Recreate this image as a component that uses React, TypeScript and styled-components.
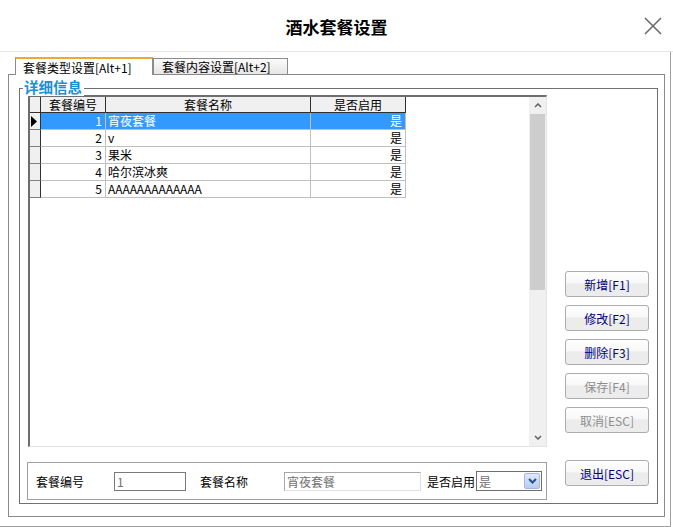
import React from "react";
import styled, { createGlobalStyle, css } from "styled-components";

const GlobalStyle = createGlobalStyle`
  html, body { margin: 0; padding: 0; background: #fff; }
  body {
    font-family: "Noto Sans CJK SC", "Liberation Sans", sans-serif;
    font-size: 12px;
    color: #000;
  }
  * { box-sizing: border-box; }
`;

const Window = styled.div`
  width: 673px;
  height: 527px;
  display: flex;
  flex-direction: column;
  background: #fff;
  overflow: hidden;
`;

const TitleBar = styled.div`
  height: 52px;
  flex-shrink: 0;
  display: grid;
  grid-template-columns: 1fr auto 1fr;
  align-items: center;
  border-bottom: 1px solid #e6e6e6;
`;

const Title = styled.div`
  grid-column: 2;
  font-size: 17px;
  font-weight: bold;
  padding-top: 1px;
`;

const CloseButton = styled.button`
  justify-self: end;
  margin-right: 9px;
  width: 22px;
  height: 22px;
  border: 0;
  padding: 0;
  background: none;
  display: flex;
  align-items: center;
  justify-content: center;
`;

const Body = styled.div`
  width: 671px;
  height: 475px;
  border-right: 1px solid #a0a0a0;
  border-bottom: 1px solid #a0a0a0;
  padding: 5px 0 0 8px;
`;

const TabStrip = styled.div`
  display: flex;
  align-items: flex-end;
  height: 17px;
  padding-left: 7px;
  position: relative;
  z-index: 1;
`;

const Tab = styled.div<{ $active?: boolean; $width: number }>`
  width: ${(p) => p.$width}px;
  display: flex;
  align-items: center;
  padding-left: 7px;
  white-space: nowrap;
  border: 1px solid #8c8c8c;
  border-bottom: none;
  ${(p) =>
    p.$active
      ? css`
          height: 18px;
          margin-bottom: -1px;
          border-top: 2px solid #f2a63a;
          background: #fff;
          padding-top: 1px;
        `
      : css`
          height: 16px;
          background: linear-gradient(#fbfbfb, #e6e6e6);
          padding-left: 8px;
        `}
`;

const Panel = styled.div`
  width: 657px;
  height: 443px;
  border: 1px solid #8a8a8a;
  padding: 13px 0 0 10px;
`;

const GroupBox = styled.div`
  position: relative;
  width: 639px;
  height: 416px;
  border: 1px solid #707070;
  padding: 6px 0 0 7px;
  display: grid;
  grid-template-columns: 520px 84px;
  column-gap: 18px;
`;

const Legend = styled.span`
  position: absolute;
  top: -11px;
  left: 3px;
  padding: 0 2px 0 1px;
  background: #fff;
  color: #1a8fd3;
  font-size: 14.5px;
  font-weight: bold;
  line-height: 18px;
`;

const LeftColumn = styled.div`
  display: flex;
  flex-direction: column;
`;

const DataGrid = styled.div`
  margin-left: 1px;
  width: 519px;
  height: 352px;
  display: flex;
  border-top: 2px solid #6e6e6e;
  border-left: 2px solid #6e6e6e;
  border-right: 1px solid #e3e3e3;
  border-bottom: 1px solid #e3e3e3;
`;

const TableArea = styled.div`
  flex: 1;
  background: #fff;
`;

const Table = styled.div`
  display: grid;
  grid-template-columns: 11px 65px 205px 95px;
  width: 376px;
`;

const HeadCell = styled.div`
  height: 16px;
  line-height: 15px;
  text-align: center;
  background: #f0f0f0;
  border-right: 1px solid #303030;
  border-bottom: 1px solid #303030;
`;

const RowHead = styled.div`
  height: 17px;
  background: #f0f0f0;
  border-right: 1px solid #303030;
  border-bottom: 1px solid #808080;
  display: flex;
  align-items: center;
  padding-left: 1px;
`;

const Cell = styled.div<{ $align?: "left" | "right"; $selected?: boolean }>`
  height: 17px;
  line-height: 16px;
  padding: 0 3px 0 2px;
  text-align: ${(p) => p.$align || "left"};
  border-right: 1px solid #c0c0c0;
  border-bottom: 1px solid #c0c0c0;
  white-space: nowrap;
  overflow: hidden;
  ${(p) =>
    p.$selected &&
    css`
      background: #3399ff;
      color: #fff;
    `}
`;

const ScrollBar = styled.div`
  width: 17px;
  display: flex;
  flex-direction: column;
  background: #f0f0f0;
`;

const ScrollArrow = styled.div`
  height: 17px;
  display: flex;
  align-items: center;
  justify-content: center;
`;

const ScrollThumb = styled.div`
  height: 176px;
  margin: 0 1px;
  background: #cdcdcd;
`;

const ScrollTrack = styled.div`
  flex: 1;
`;

const Form = styled.div`
  margin-top: 15px;
  width: 520px;
  height: 38px;
  border: 1px solid #a0a0a0;
  display: flex;
  align-items: center;
  padding-left: 8px;
`;

const Label = styled.span<{ $width: number; $gap?: number }>`
  width: ${(p) => p.$width}px;
  margin-left: ${(p) => p.$gap || 0}px;
  white-space: nowrap;
  flex-shrink: 0;
`;

const TextBox = styled.div<{ $width: number; $soft?: boolean }>`
  width: ${(p) => p.$width}px;
  height: 19px;
  line-height: 17px;
  padding-left: 2px;
  color: #707070;
  flex-shrink: 0;
  border: 1px solid #7a7a7a;
  ${(p) =>
    p.$soft &&
    css`
      border-color: #a8a8a8 #e0e0e0 #e0e0e0 #a8a8a8;
    `}
`;

const Select = styled.div`
  width: 66px;
  height: 20px;
  border: 1px solid #6f6f6f;
  display: flex;
  align-items: center;
  padding: 0 1px 0 2px;
  color: #707070;
`;

const SelectValue = styled.span`
  flex: 1;
`;

const DropButton = styled.div`
  width: 16px;
  height: 16px;
  border: 1px solid #a4b8e2;
  border-radius: 2px;
  background: linear-gradient(#dfe9fc, #b7ccf4);
  display: flex;
  align-items: center;
  justify-content: center;
`;

const ButtonColumn = styled.div`
  display: flex;
  flex-direction: column;
  padding-top: 176px;
`;

const ActionButton = styled.button<{ $disabled?: boolean; $top?: number }>`
  width: 84px;
  height: 26px;
  margin-top: ${(p) => p.$top ?? 8}px;
  border: 1px solid #adadad;
  border-radius: 3px;
  background: linear-gradient(#fefefe 0%, #f8f8f8 45%, #ececec 50%, #ececec 100%);
  font-family: inherit;
  font-size: 12px;
  padding: 0;
  color: ${(p) => (p.$disabled ? "#8e8e8e" : "#000080")};
`;

const Chevron = ({ up }: { up?: boolean }) => (
  <svg width="8" height="5" viewBox="0 0 8 5">
    <polyline
      points={up ? "1,4 4,1 7,4" : "1,1 4,4 7,1"}
      fill="none"
      stroke="#606060"
      strokeWidth="1.5"
    />
  </svg>
);

const rows = [
  { id: 1, name: "宵夜套餐", on: "是" },
  { id: 2, name: "v", on: "是" },
  { id: 3, name: "果米", on: "是" },
  { id: 4, name: "哈尔滨冰爽", on: "是" },
  { id: 5, name: "AAAAAAAAAAAAA", on: "是" },
];

const buttons = [
  { label: "新增[F1]", top: 0 },
  { label: "修改[F2]" },
  { label: "删除[F3]" },
  { label: "保存[F4]", disabled: true },
  { label: "取消[ESC]", disabled: true },
  { label: "退出[ESC]", top: 27 },
];

export default function App() {
  return (
    <Window>
      <GlobalStyle />
      <TitleBar>
        <Title>酒水套餐设置</Title>
        <CloseButton aria-label="关闭">
          <svg width="20" height="20" viewBox="0 0 20 20">
            <path d="M2 2 L18 18 M18 2 L2 18" stroke="#6a6a6a" strokeWidth="1.6" />
          </svg>
        </CloseButton>
      </TitleBar>
      <Body>
        <TabStrip>
          <Tab $active $width={138}>套餐类型设置[Alt+1]</Tab>
          <Tab $width={135}>套餐内容设置[Alt+2]</Tab>
        </TabStrip>
        <Panel>
          <GroupBox>
            <Legend>详细信息</Legend>
            <LeftColumn>
              <DataGrid>
                <TableArea>
                  <Table>
                    <HeadCell />
                    <HeadCell>套餐编号</HeadCell>
                    <HeadCell>套餐名称</HeadCell>
                    <HeadCell>是否启用</HeadCell>
                    {rows.map((r, i) => (
                      <React.Fragment key={r.id}>
                        <RowHead>
                          {i === 0 && (
                            <svg width="7" height="11" viewBox="0 0 7 11">
                              <polygon points="0,0 6,5.5 0,11" fill="#000" />
                            </svg>
                          )}
                        </RowHead>
                        <Cell $align="right" $selected={i === 0}>{r.id}</Cell>
                        <Cell $selected={i === 0}>{r.name}</Cell>
                        <Cell $align="right" $selected={i === 0}>{r.on}</Cell>
                      </React.Fragment>
                    ))}
                  </Table>
                </TableArea>
                <ScrollBar>
                  <ScrollArrow>
                    <Chevron up />
                  </ScrollArrow>
                  <ScrollThumb />
                  <ScrollTrack />
                  <ScrollArrow>
                    <Chevron />
                  </ScrollArrow>
                </ScrollBar>
              </DataGrid>
              <Form>
                <Label $width={78}>套餐编号</Label>
                <TextBox $width={72}>1</TextBox>
                <Label $width={84} $gap={14}>套餐名称</Label>
                <TextBox $width={137} $soft>宵夜套餐</TextBox>
                <Label $width={49} $gap={6}>是否启用</Label>
                <Select>
                  <SelectValue>是</SelectValue>
                  <DropButton>
                    <svg width="9" height="6" viewBox="0 0 9 6">
                      <polyline points="1,1 4.5,4.5 8,1" fill="none" stroke="#2b4e8c" strokeWidth="2" />
                    </svg>
                  </DropButton>
                </Select>
              </Form>
            </LeftColumn>
            <ButtonColumn>
              {buttons.map((b) => (
                <ActionButton key={b.label} $disabled={b.disabled} $top={b.top}>
                  {b.label}
                </ActionButton>
              ))}
            </ButtonColumn>
          </GroupBox>
        </Panel>
      </Body>
    </Window>
  );
}
